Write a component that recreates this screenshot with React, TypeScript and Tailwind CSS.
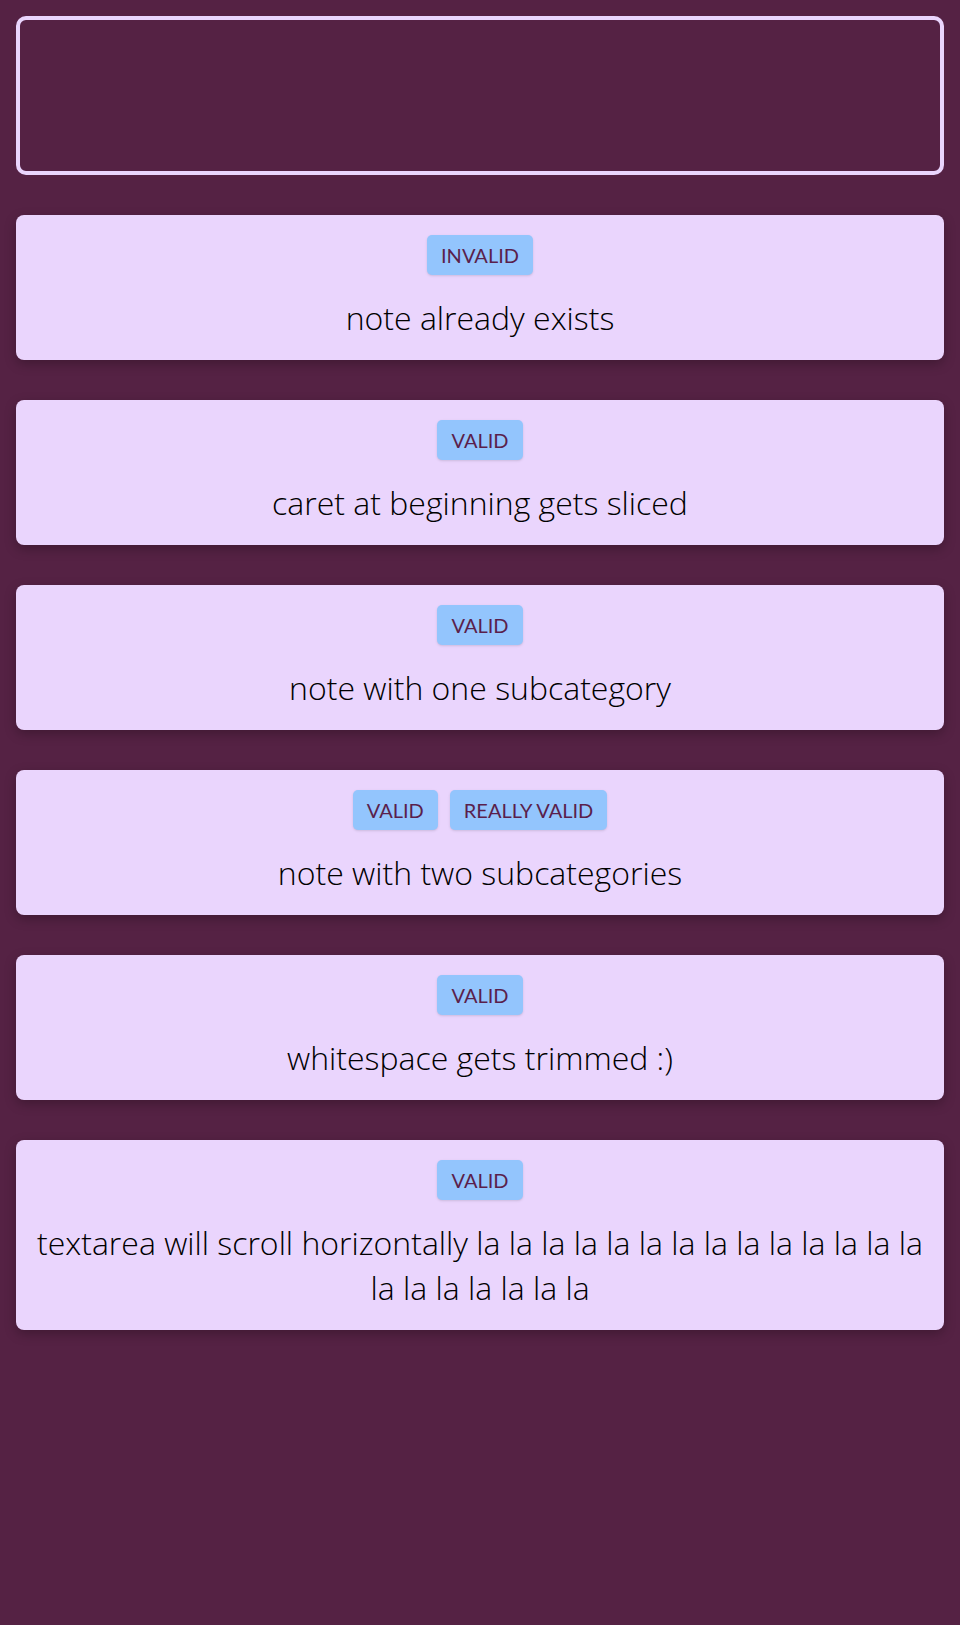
const notes: { tags: string[]; text: string }[] = [
  { tags: ["invalid"], text: "note already exists" },
  { tags: ["valid"], text: "caret at beginning gets sliced" },
  { tags: ["valid"], text: "note with one subcategory" },
  { tags: ["valid", "really valid"], text: "note with two subcategories" },
  { tags: ["valid"], text: "whitespace gets trimmed :)" },
  {
    tags: ["valid"],
    text: "textarea will scroll horizontally la la la la la la la la la la la la la la la la la la la la la",
  },
];

function Tag({ label }: { label: string }) {
  return (
    <span className="h-10 px-[14px] flex items-center rounded-[5px] bg-[#93c5fd] text-[#5a1f4c] text-[20px] font-normal uppercase shadow-sm font-['Lato',sans-serif]">
      {label}
    </span>
  );
}

export default function App() {
  return (
    <div className="min-h-screen bg-[#552244] p-4 flex flex-col gap-10 font-['Open_Sans',sans-serif]">
      <textarea className="block w-full h-[159px] rounded-[10px] border-4 border-[#ead5fd] bg-transparent resize-none outline-none text-[#ead5fd]" />

      {notes.map((n, i) => (
        <div
          key={i}
          className="rounded-[8px] bg-[#ead5fd] px-5 py-5 flex flex-col items-center gap-5 shadow-[0_4px_12px_rgba(0,0,0,0.25)]"
        >
          <div className="flex gap-3">
            {n.tags.map((t) => (
              <Tag key={t} label={t} />
            ))}
          </div>
          <p className="text-[32px] leading-[45px] font-light text-black text-center">{n.text}</p>
        </div>
      ))}
    </div>
  );
}
